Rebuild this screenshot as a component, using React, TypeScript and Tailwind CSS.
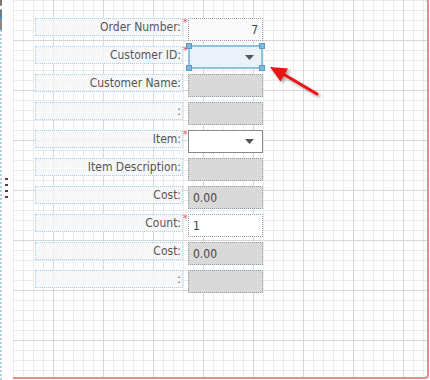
import React from "react";

type Kind = "light" | "gray" | "select" | "selected" | "white";
type Row = { label: string; req?: boolean; kind: Kind; value?: string; right?: boolean };

const rows: Row[] = [
  { label: "Order Number:", req: true, kind: "light", value: "7", right: true },
  { label: "Customer ID:", req: true, kind: "selected" },
  { label: "Customer Name:", kind: "gray" },
  { label: ":", kind: "gray" },
  { label: "Item:", req: true, kind: "select" },
  { label: "Item Description:", kind: "gray" },
  { label: "Cost:", kind: "gray", value: "0.00" },
  { label: "Count:", req: true, kind: "white", value: "1" },
  { label: "Cost:", kind: "gray", value: "0.00" },
  { label: ":", kind: "gray" },
];

function Tri() {
  return (
    <svg width="9" height="5" viewBox="0 0 9 5" className="shrink-0">
      <polygon points="0,0 9,0 4.5,5" fill="#555" />
    </svg>
  );
}

function Handle({ pos }: { pos: string }) {
  return <div className={`absolute ${pos} w-[6px] h-[6px] bg-[#7fb8db] border border-[#5a9cc8]`} />;
}

function Field({ r }: { r: Row }) {
  if (r.kind === "selected") {
    return (
      <div className="relative w-[75px] h-[24px] mt-[-1px] border-2 border-[#8ec2df] bg-[#eaf1f9] flex items-center justify-end pr-[7px]">
        <Tri />
        <Handle pos="left-[-4px] top-[-4px]" />
        <Handle pos="right-[-4px] top-[-4px]" />
        <Handle pos="left-[-4px] bottom-[-4px]" />
        <Handle pos="right-[-4px] bottom-[-4px]" />
      </div>
    );
  }
  if (r.kind === "select") {
    return (
      <div className="w-[75px] h-[23px] border border-[#8a8a8a] bg-white flex items-center justify-end pr-[8px]">
        <Tri />
      </div>
    );
  }
  const bg =
    r.kind === "gray" ? "bg-[#d9d9d9]" : r.kind === "light" ? "bg-[#fafafa]" : "bg-white";
  return (
    <div
      className={`w-[75px] h-[23px] border border-dotted border-[#8f9cab] ${bg} flex items-center text-[12px] text-[#444] ${
        r.right ? "justify-end pr-[4px]" : "pl-[4px]"
      }`}
    >
      {r.value}
    </div>
  );
}

export default function App() {
  return (
    <div className="w-[430px] h-[380px] bg-white overflow-hidden flex font-[family-name:'DejaVu_Sans_Condensed','DejaVu_Sans',sans-serif]">
      {/* left strip */}
      <div className="w-[13px] h-full shrink-0 flex">
        <div className="w-[2px] h-full flex flex-col">
          <div className="h-[15px] border-l-2 border-dashed border-[#777]" />
          <div className="h-[3px] bg-[#3a8ee6]" />
          <div className="h-[12px] border-l-2 border-dashed border-[#8a8a8a]" />
          <div className="flex-1 border-l-2 border-dotted border-[#a9d3ea]" />
        </div>
        <div className="flex flex-col justify-center gap-[4px] pl-[3px] pb-[4px]">
          <div className="w-[3px] h-[2px] bg-[#444]" />
          <div className="w-[3px] h-[2px] bg-[#444]" />
          <div className="w-[3px] h-[2px] bg-[#444]" />
          <div className="w-[3px] h-[2px] bg-[#444]" />
        </div>
      </div>

      {/* canvas */}
      <div className="relative w-[416px] h-[381px] mt-[-2px] shrink-0 border-t-2 border-r-2 border-b-2 border-[#e88a8a] rounded-tr-[4px] rounded-br-[4px] overflow-hidden">
        <svg className="absolute inset-0 w-full h-full" aria-hidden>
          <defs>
            <pattern id="g" width="50" height="50" patternUnits="userSpaceOnUse">
              <rect x="0" y="0" width="1" height="50" fill="#ebebeb" />
              <rect x="10" y="0" width="1" height="50" fill="#ebebeb" />
              <rect x="20" y="0" width="1" height="50" fill="#ebebeb" />
              <rect x="30" y="0" width="1" height="50" fill="#ebebeb" />
              <rect x="0" y="0" width="50" height="1" fill="#ebebeb" />
              <rect x="0" y="10" width="50" height="1" fill="#ebebeb" />
              <rect x="0" y="20" width="50" height="1" fill="#ebebeb" />
              <rect x="0" y="30" width="50" height="1" fill="#ebebeb" />
              <rect x="40" y="0" width="1" height="50" fill="#d6d6d6" />
              <rect x="0" y="40" width="50" height="1" fill="#d6d6d6" />
            </pattern>
          </defs>
          <rect width="100%" height="100%" fill="url(#g)" />
        </svg>

        <div className="relative flex flex-col gap-[5px] pt-[18px] pl-[22px]">
          {rows.map((r, i) => (
            <div key={i} className="flex items-start h-[23px]">
              <div className="w-[148px] h-[18px] border border-dotted border-[#a3d2ea] bg-[#f6f6f6]/80 flex items-center justify-end pr-[1px] text-[12px] text-[#555] leading-none">
                {r.label}
              </div>
              <div className="w-[5px] h-[18px] text-[10px] leading-none text-[#e5484d]">
                {r.req ? "*" : ""}
              </div>
              <Field r={r} />
            </div>
          ))}
        </div>

        {/* annotation arrow */}
        <svg className="absolute inset-0 w-full h-full pointer-events-none" aria-hidden>
          <defs>
            <filter id="sh" x="-50%" y="-50%" width="200%" height="200%">
              <feDropShadow dx="2" dy="2" stdDeviation="1.5" floodColor="#000" floodOpacity="0.35" />
            </filter>
          </defs>
          <g filter="url(#sh)" transform="translate(-13,0)">
            <line x1="284" y1="74.5" x2="317" y2="94" stroke="#e81212" strokeWidth="3" strokeLinecap="round" />
            <polygon points="270,67 280.5,81.5 288,68.5" fill="#e81212" />
          </g>
        </svg>
      </div>
    </div>
  );
}
